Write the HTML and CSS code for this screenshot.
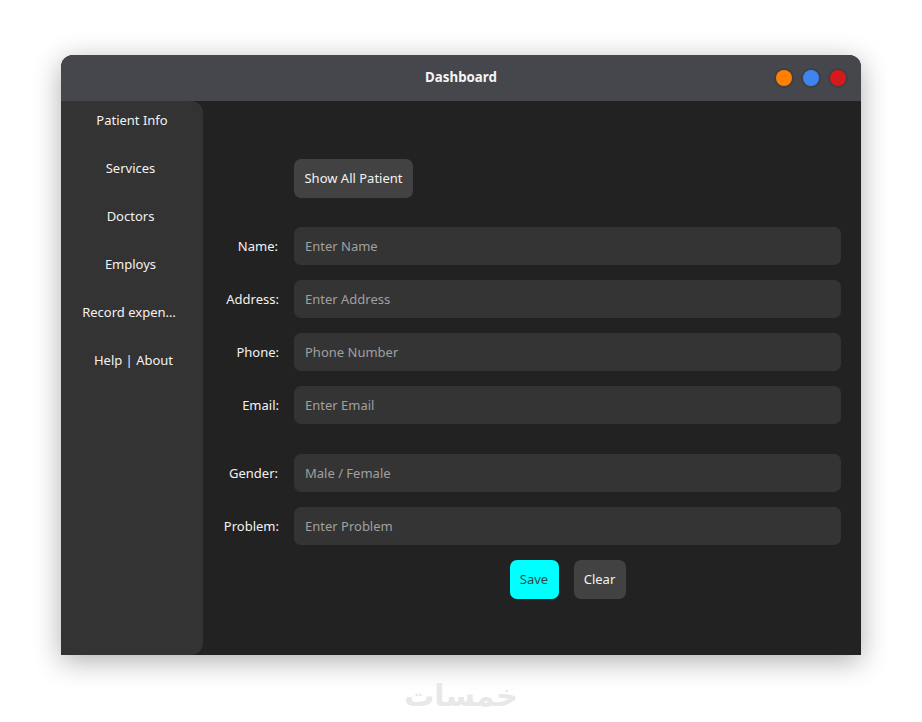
FILE: index.html
```html
<!DOCTYPE html>
<html>
    <head>
        <title>Dashboard</title>
        <link rel="stylesheet" href="styles.css">
    </head>
    <body>

        <!-- Application window -->
        <div class="window">
            <div class="titlebar">
                <span class="title">Dashboard</span>
                <div class="controls">
                    <span class="dot dot-orange"></span>
                    <span class="dot dot-blue"></span>
                    <span class="dot dot-red"></span>
                </div>
            </div>

            <div class="main">
                <!-- Left panel for navigation -->
                <div class="sidebar">
                    <a class="nav-item nav-patient">Patient Info</a>
                    <a class="nav-item nav-short">Services</a>
                    <a class="nav-item nav-short">Doctors</a>
                    <a class="nav-item nav-short">Employs</a>
                    <a class="nav-item nav-record">Record expen…</a>
                    <a class="nav-item nav-help">Help | About</a>
                </div>

                <!-- Right panel for the patient form -->
                <div class="content">
                    <div class="row row-top">
                        <span class="label"></span>
                        <button class="btn btn-show">Show All Patient</button>
                    </div>

                    <div class="row">
                        <label class="label label-tight">Name:</label>
                        <input class="field" type="text" placeholder="Enter Name">
                    </div>
                    <div class="row">
                        <label class="label">Address:</label>
                        <input class="field" type="text" placeholder="Enter Address">
                    </div>
                    <div class="row">
                        <label class="label">Phone:</label>
                        <input class="field" type="text" placeholder="Phone Number">
                    </div>
                    <div class="row row-split">
                        <label class="label">Email:</label>
                        <input class="field" type="text" placeholder="Enter Email">
                    </div>
                    <div class="row">
                        <label class="label label-tight">Gender:</label>
                        <input class="field" type="text" placeholder="Male / Female">
                    </div>
                    <div class="row">
                        <label class="label">Problem:</label>
                        <input class="field" type="text" placeholder="Enter Problem">
                    </div>

                    <div class="actions">
                        <button class="btn btn-save">Save</button>
                        <button class="btn btn-clear">Clear</button>
                    </div>
                </div>
            </div>
        </div>

        <div class="watermark" dir="rtl" lang="ar">خمسات</div>

    </body>
</html>
```

FILE: styles.css
```css
/* Layout for the entire page */
html, body {
    height: 100%;
}

body {
    margin: 0;
    padding: 55px 61px 0;
    box-sizing: border-box;
    background-color: #fff;
    font-family: "Noto Sans", Arial, sans-serif;
    font-size: 13px;
    color: #f2f2f2;
    overflow: hidden;
}

.window {
    width: 800px;
    height: 600px;
    display: flex;
    flex-direction: column;
    background-color: #222;
    border-radius: 12px 12px 0 0;
    box-shadow: 0 6px 28px rgba(0, 0, 0, 0.32);
}

/* Title bar */
.titlebar {
    height: 46px;
    flex: none;
    padding-bottom: 2px;
    box-sizing: border-box;
    display: flex;
    align-items: center;
    justify-content: center;
    position: relative;
    background-color: #46474c;
    border-radius: 12px 12px 0 0;
}

.title {
    font-size: 13.3px;
    font-weight: 700;
    color: #f4f4f4;
}

.controls {
    position: absolute;
    right: 15px;
    top: 15px;
    display: flex;
    gap: 11px;
}

.dot {
    width: 16px;
    height: 16px;
    border-radius: 50%;
    box-shadow: 0 0 0 2px #3e3f47;
}

.dot-orange { background-color: #ff7f00; }
.dot-blue { background-color: #3f85ee; }
.dot-red { background-color: #d41a1a; }

.main {
    flex: 1;
    display: flex;
}

/* Left section: navigation */
.sidebar {
    width: 142px;
    flex: none;
    display: flex;
    flex-direction: column;
    background-color: #333;
    border-radius: 0 12px 12px 0;
}

.nav-item {
    height: 38px;
    line-height: 38px;
    margin-bottom: 10px;
    text-align: center;
}

.nav-short { padding-right: 3px; }
.nav-record { padding-right: 6px; }
.nav-help { padding-left: 3px; }

/* Right section: form */
.content {
    flex: 1;
    display: flex;
    flex-direction: column;
    padding: 58px 20px 0;
}

.row {
    display: flex;
    align-items: center;
    gap: 15px;
    margin-bottom: 15px;
}

.row-top { margin-bottom: 29px; }
.row-split { margin-bottom: 30px; }

.label {
    width: 56px;
    flex: none;
    box-sizing: border-box;
    text-align: right;
}

.label-tight { padding-right: 1px; }

.field {
    flex: 1;
    min-width: 0;
    height: 38px;
    padding: 0 11px;
    box-sizing: border-box;
    border: none;
    border-radius: 7px;
    outline: none;
    background-color: #343434;
    color: #f2f2f2;
    font-family: inherit;
    font-size: 13px;
}

.field::placeholder {
    color: #a0a0a0;
}

.btn {
    height: 39px;
    padding: 0 10px 2px;
    border: none;
    border-radius: 7px;
    background-color: #424242;
    color: #f2f2f2;
    font-family: inherit;
    font-size: 13px;
}

.btn-show { min-width: 119px; }
.btn-clear { min-width: 52px; }

.btn-save {
    min-width: 49px;
    background-color: #0ff;
    color: #2d4a4a;
}

.actions {
    display: flex;
    justify-content: center;
    gap: 15px;
    padding-left: 71px;
}

/* Faint logo under the window */
.watermark {
    margin-top: 21px;
    text-align: center;
    font-family: "DejaVu Sans", sans-serif;
    font-size: 30px;
    font-weight: 700;
    line-height: 40px;
    color: #e8e8e8;
}
```
